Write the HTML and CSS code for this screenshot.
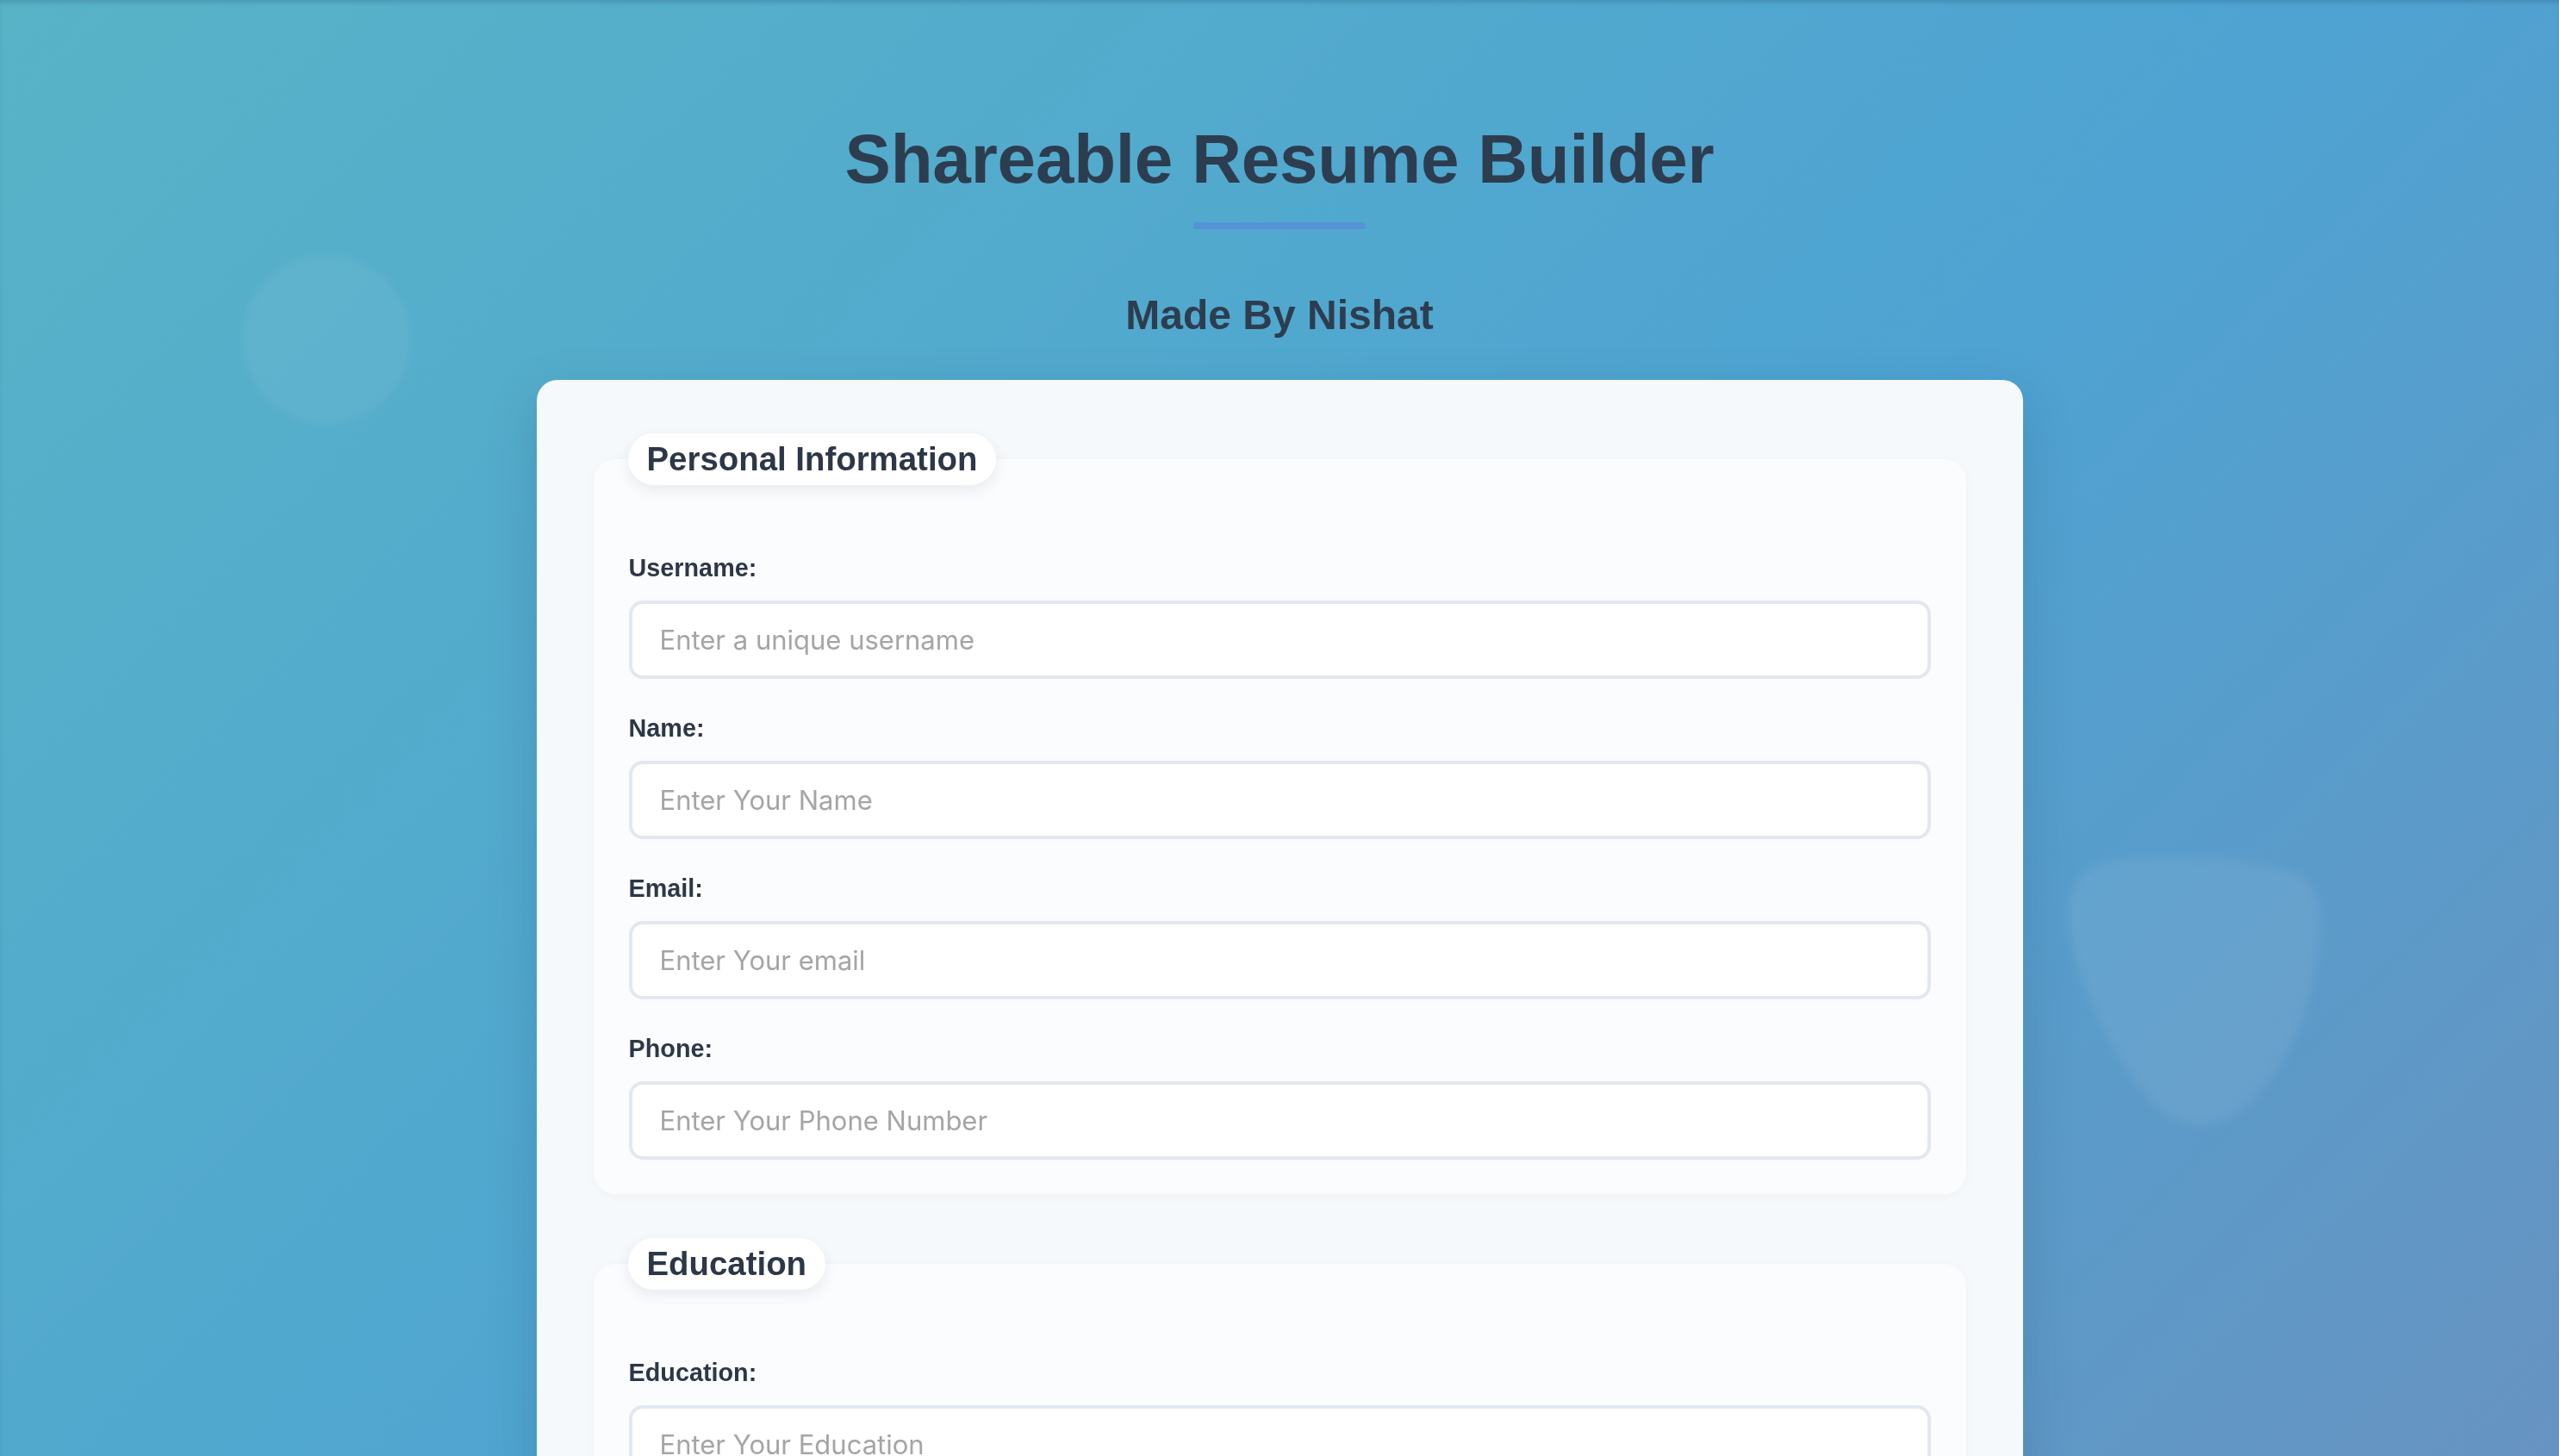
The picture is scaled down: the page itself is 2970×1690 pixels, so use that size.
FILE: index.html
```html
<!DOCTYPE html>
<html lang="en">
<head>
<meta charset="utf-8">
<title>Shareable Resume Builder</title>
<link rel="stylesheet" href="styles.css">
</head>
<body>
<div class="decor" aria-hidden="true">
  <svg class="decor-circle" width="240" height="240" viewBox="0 0 240 240">
    <defs><filter id="b1" x="-20%" y="-20%" width="140%" height="140%"><feGaussianBlur stdDeviation="5"/></filter></defs>
    <circle cx="120" cy="120" r="98" fill="#ffffff" fill-opacity="0.06" filter="url(#b1)"/>
  </svg>
  <svg class="decor-blob" width="340" height="350" viewBox="0 0 340 350">
    <defs><filter id="b2" x="-20%" y="-20%" width="140%" height="140%"><feGaussianBlur stdDeviation="6"/></filter></defs>
    <path d="M70 22 C130 12 230 16 282 34 C312 45 320 72 315 110 C308 180 288 250 230 305 C198 334 158 336 128 310 C78 262 40 182 22 100 C15 60 35 28 70 22 Z" fill="#ffffff" fill-opacity="0.07" filter="url(#b2)"/>
  </svg>
</div>
<main class="page">
  <h1 class="title">Shareable Resume Builder</h1>
  <div class="title-bar"></div>
  <h2 class="subtitle">Made By Nishat</h2>
  <form class="card">
    <section class="section">
      <h3 class="pill">Personal Information</h3>
      <div class="field">
        <label class="label" for="username">Username:</label>
        <input class="input" id="username" type="text" placeholder="Enter a unique username">
      </div>
      <div class="field">
        <label class="label" for="name">Name:</label>
        <input class="input" id="name" type="text" placeholder="Enter Your Name">
      </div>
      <div class="field">
        <label class="label" for="email">Email:</label>
        <input class="input" id="email" type="email" placeholder="Enter Your email">
      </div>
      <div class="field">
        <label class="label" for="phone">Phone:</label>
        <input class="input" id="phone" type="tel" placeholder="Enter Your Phone Number">
      </div>
    </section>
    <section class="section">
      <h3 class="pill">Education</h3>
      <div class="field">
        <label class="label" for="education">Education:</label>
        <input class="input" id="education" type="text" placeholder="Enter Your Education">
      </div>
    </section>
    <section class="section">
      <h3 class="pill">Work Experience</h3>
      <div class="field">
        <label class="label" for="experience">Experience:</label>
        <input class="input" id="experience" type="text" placeholder="Enter Your Experience">
      </div>
    </section>
  </form>
</main>
</body>
</html>
```

FILE: styles.css
```css
html {
  overflow: hidden;
}

body {
  margin: 0;
  min-height: 100vh;
  font-family: "Liberation Sans", Arial, Helvetica, sans-serif;
  color: #2d3d50;
  background: linear-gradient(135deg, #58b3c7 0%, #4ea3d2 52%, #6e8fbd 100%);
  box-shadow: inset 0 5px 6px -3px rgba(20, 60, 90, 0.25);
}

.decor {
  position: fixed;
  inset: 0;
  pointer-events: none;
}

.decor-circle {
  position: absolute;
  left: 259px;
  top: 274px;
}

.decor-blob {
  position: absolute;
  left: 2378px;
  top: 978px;
}

.page {
  position: relative;
  display: flex;
  flex-direction: column;
  align-items: center;
  padding-top: 137px;
}

.title {
  margin: 0;
  font-size: 80px;
  line-height: 96px;
  font-weight: 700;
  color: #2d3d50;
  letter-spacing: -0.2px;
}

.title-bar {
  width: 200px;
  height: 8px;
  margin-top: 25px;
  border-radius: 4px;
  background: #5592d6;
}

.subtitle {
  margin: 71px 0 0;
  font-size: 48px;
  line-height: 58px;
  font-weight: 700;
  color: #2d3d50;
}

.card {
  box-sizing: border-box;
  width: 1725px;
  margin-top: 46px;
  padding: 92px 66px 80px;
  background: #f6f9fb;
  border-radius: 24px;
  box-shadow: 0 20px 60px rgba(20, 50, 90, 0.18);
  display: flex;
  flex-direction: column;
  gap: 81px;
}

.section {
  display: flex;
  flex-direction: column;
  padding: 0 41px 40px;
  background: #fbfcfe;
  border-radius: 26px;
  box-shadow: 0 2px 14px rgba(30, 60, 90, 0.03);
}

.pill {
  align-self: flex-start;
  margin: -30px 0 80px -1px;
  height: 60px;
  padding: 0 22px;
  line-height: 60px;
  font-size: 38.4px;
  font-weight: 700;
  color: #2d3748;
  background: #ffffff;
  border-radius: 30px;
  box-shadow: 0 6px 16px rgba(30, 50, 80, 0.09);
}

.field {
  display: flex;
  flex-direction: column;
}

.field + .field {
  margin-top: 41px;
}

.label {
  display: block;
  margin-bottom: 21px;
  font-size: 28.8px;
  line-height: 33px;
  font-weight: 700;
  color: #2d3748;
}

.input {
  box-sizing: border-box;
  width: 100%;
  height: 91px;
  margin: 0;
  padding: 0 32px;
  border: 4px solid #e2e8f0;
  border-radius: 16px;
  background: #ffffff;
  font-family: Inter, "Noto Sans", sans-serif;
  font-size: 31px;
  color: #2d3748;
  outline: none;
}

.input::placeholder {
  color: #a5a5a5;
}
```
